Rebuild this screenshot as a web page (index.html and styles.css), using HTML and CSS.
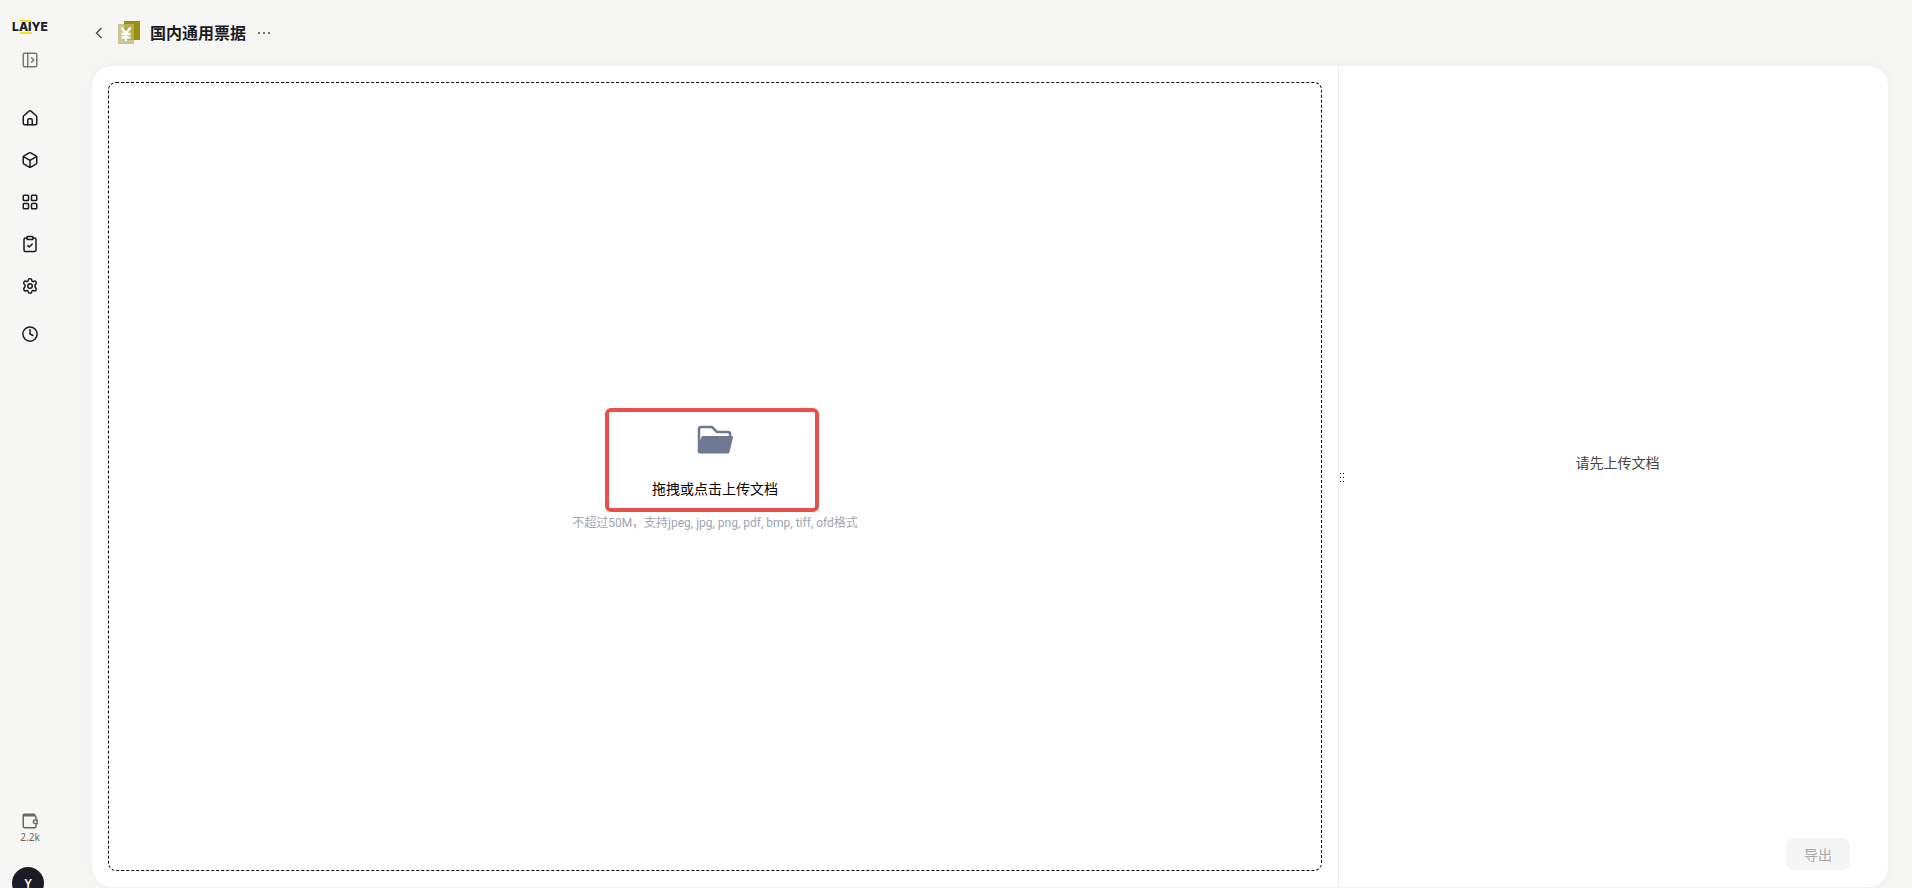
FILE: index.html
```html
<!DOCTYPE html>
<html lang="zh-CN">
<head>
    <meta charset="UTF-8">
    <meta name="viewport" content="width=device-width, initial-scale=1.0">
    <title>国内通用票据</title>
    <link rel="stylesheet" href="styles.css">
</head>
<body>
    <!-- 侧边栏 -->
    <aside class="sidebar">
        <a href="#" class="logo">LAIYE</a>
        <button type="button" class="icon-button toggle" aria-label="展开菜单">
            <svg class="icon" viewBox="0 0 24 24"><rect x="3" y="3" width="18" height="18" rx="2"/><path d="M9 3v18M14 9l3 3-3 3"/></svg>
        </button>
        <nav class="nav">
            <a href="#" aria-label="首页">
                <svg class="icon" viewBox="0 0 24 24"><path d="M3 10.5a2 2 0 0 1 .7-1.5l7-6.100a2 2 0 0 1 2.600 0l7 6.100a2 2 0 0 1 .7 1.500V19a2 2 0 0 1-2 2H5a2 2 0 0 1-2-2z"/><path d="M9 21v-6a2 2 0 0 1 2-2h2a2 2 0 0 1 2 2v6"/></svg>
            </a>
            <a href="#" aria-label="模型">
                <svg class="icon" viewBox="0 0 24 24"><path d="M11 2.600a2 2 0 0 1 2 0l7 4a2 2 0 0 1 1 1.700v7.400a2 2 0 0 1-1 1.700l-7 4a2 2 0 0 1-2 0l-7-4a2 2 0 0 1-1-1.700V8.300a2 2 0 0 1 1-1.700z"/><path d="M3.300 7.500L12 12.500l8.700-5M12 12.500v9"/></svg>
            </a>
            <a href="#" aria-label="应用">
                <svg class="icon" viewBox="0 0 24 24"><rect x="3" y="3" width="7" height="7" rx="1"/><rect x="14" y="3" width="7" height="7" rx="1"/><rect x="3" y="14" width="7" height="7" rx="1"/><rect x="14" y="14" width="7" height="7" rx="1"/></svg>
            </a>
            <a href="#" aria-label="任务">
                <svg class="icon" viewBox="0 0 24 24"><rect x="8" y="2" width="8" height="4" rx="1"/><path d="M16 4h2a2 2 0 0 1 2 2v14a2 2 0 0 1-2 2H6a2 2 0 0 1-2-2V6a2 2 0 0 1 2-2h2M9 14l2 2 4-4"/></svg>
            </a>
            <a href="#" aria-label="设置">
                <svg class="icon" viewBox="0 0 24 24"><path d="M10 3.200c.3-1.300 3.700-1.300 4 0 .3 2.600 1.700 3.300 3.600 2.400 1.800-.7 3.700 2.400 2.400 3.600-2 1.500-2 4.100 0 5.600 1.300 1.200-.6 4.300-2.400 3.600-1.900-.9-3.300-.2-3.600 2.400-.3 1.300-3.700 1.300-4 0-.3-2.600-1.700-3.300-3.600-2.400-1.800.7-3.700-2.400-2.400-3.600 2-1.500 2-4.100 0-5.600-1.300-1.200.6-4.300 2.400-3.600 1.900.9 3.300.2 3.600-2.400z"/><circle cx="12" cy="12" r="3"/></svg>
            </a>
            <a href="#" class="history" aria-label="历史记录">
                <svg class="icon" viewBox="0 0 24 24"><circle cx="12" cy="12" r="9.500"/><path d="M12 6v6l4 2"/></svg>
            </a>
        </nav>
        <div class="account">
            <a href="#" class="wallet">
                <svg class="icon" viewBox="0 0 24 24"><path d="M20 9V7a2 2 0 0 0-2-2H4a1 1 0 0 1-1-1 1 1 0 0 1 1-1h14v2M3 4v15a2 2 0 0 0 2 2h13a2 2 0 0 0 2-2v-2"/><path d="M19 10.500h2.500v5H19a2.500 2.500 0 0 1 0-5z"/></svg>
                <span>2.2k</span>
            </a>
            <button type="button" class="avatar">Y</button>
        </div>
    </aside>

    <main class="main">
        <header class="header">
            <button type="button" class="icon-button back" aria-label="返回">
                <svg viewBox="0 0 14 14"><path d="M9.500 2L4.500 7l5 5"/></svg>
            </button>
            <svg class="app-icon" viewBox="0 0 24 24" aria-hidden="true">
                <path d="M7 0h16v19H7z" fill="#998f0c"/>
                <path d="M1 3h16v20H1z" fill="#c9c78f"/>
                <path d="M7 3h10v16H7z" fill="#b3ad58"/>
                <path d="M4.500 6.500l4.500 6 4.500-6M9 12.500V20M4.500 13h9M4.500 16.500h9" fill="none" stroke="#fff" stroke-width="2.300"/>
            </svg>
            <h1>国内通用票据</h1>
            <button type="button" class="icon-button more" aria-label="更多">
                <svg viewBox="0 0 14 14"><circle cx="2" cy="7" r="1"/><circle cx="7" cy="7" r="1"/><circle cx="12" cy="7" r="1"/></svg>
            </button>
        </header>

        <div class="card">
            <!-- 上传区域 -->
            <section class="upload-panel">
                <label class="dropzone">
                    <input type="file" class="file-input" accept=".jpeg,.jpg,.png,.pdf,.bmp,.tiff,.ofd" multiple>
                    <span class="upload-main">
                        <svg class="folder" viewBox="0 0 40 40" aria-hidden="true">
                            <path d="M4 30V8q0-2 2-2h11l5 5h11q2 0 2 2v4" fill="none" stroke="#6f7992" stroke-width="2.500"/>
                            <path d="M6.500 16q.5-1 1.500-1H37q1.500 0 1 1.500L34.500 31q-.4 1.500-2 1.500H4.500q-1.800 0-1.800-2L4 22z" fill="#6f7992"/>
                        </svg>
                        <span class="upload-title">拖拽或点击上传文档</span>
                        <span class="highlight"></span>
                    </span>
                    <span class="upload-hint">不超过50M，支持jpeg, jpg, png, pdf, bmp, tiff, ofd格式</span>
                </label>
            </section>

            <!-- 识别结果 -->
            <section class="result-panel">
                <div class="resize-handle">
                    <svg viewBox="0 0 8 12"><path d="M1 2h1v1H1zM4 2h1v1H4zM1 6h1v1H1zM4 6h1v1H4zM1 10h1v1H1zM4 10h1v1H4z"/></svg>
                </div>
                <div class="result">
                    <p class="empty">请先上传文档</p>
                    <button type="button" class="export" disabled>导出</button>
                </div>
            </section>
        </div>
    </main>
</body>
</html>
```

FILE: styles.css
```css
* {
    box-sizing: border-box;
}
body {
    margin: 0;
    height: 100vh;
    display: flex;
    overflow: hidden;
    background-color: #f6f6f4;
    color: #1a1b24;
    font-family: "Noto Sans", "Noto Sans CJK SC", sans-serif;
    font-size: 14px;
    line-height: 22px;
}
a {
    color: inherit;
    text-decoration: none;
}
button {
    font-family: inherit;
    cursor: pointer;
}
.icon {
    display: block;
    width: 18px;
    height: 18px;
    fill: none;
    stroke: currentColor;
    stroke-width: 2;
    stroke-linecap: round;
    stroke-linejoin: round;
}
.icon-button {
    display: block;
    padding: 0;
    border: none;
    background: none;
    color: #444;
}

/* 侧边栏 */
.sidebar {
    width: 60px;
    flex-shrink: 0;
    display: flex;
    flex-direction: column;
    align-items: center;
    padding-top: 20px;
}
.logo {
    height: 14px;
    line-height: 14px;
    font-family: Inter, sans-serif;
    font-size: 12px;
    font-weight: 800;
    background: linear-gradient(#f5e020, #f5e020) 8px 0 / 12px 2px no-repeat,
        linear-gradient(#f5e020, #f5e020) 8px 12px / 12px 2px no-repeat;
}
.toggle {
    margin-top: 17px;
    color: #777;
}
.nav {
    display: flex;
    flex-direction: column;
    gap: 24px;
    margin-top: 40px;
}
.history {
    margin-top: 6px;
}
.account {
    display: flex;
    flex-direction: column;
    width: 36px;
    margin-top: auto;
    margin-bottom: -11px;
}
.wallet {
    display: flex;
    flex-direction: column;
    align-items: center;
    color: #666;
    font-size: 10px;
    line-height: 14px;
}
.avatar {
    width: 32px;
    height: 32px;
    margin-top: 23px;
    padding: 0;
    border: none;
    border-radius: 50%;
    background-color: #1a1b24;
    color: #fff;
    font-size: 12px;
    font-weight: 600;
}

/* 主区域 */
.main {
    flex: 1;
    min-width: 0;
    display: flex;
    flex-direction: column;
    padding: 0 24px 1px 32px;
}
.header {
    height: 66px;
    flex-shrink: 0;
    display: flex;
    align-items: center;
}
.back svg,
.more svg {
    display: block;
    width: 14px;
    height: 14px;
}
.back svg {
    fill: none;
    stroke: currentColor;
    stroke-width: 1.3;
}
.more svg {
    fill: currentColor;
}
.app-icon {
    width: 24px;
    height: 24px;
    margin: 0 9px 0 11px;
}
.header h1 {
    margin: 0 11px 0 0;
    font-size: 16px;
    font-weight: bold;
}
.card {
    flex: 1;
    min-height: 0;
    display: grid;
    grid-template-columns: minmax(0, 1246fr) minmax(0, 550fr);
    border-radius: 20px;
    background-color: #fff;
    box-shadow: 0 0 8px rgba(0, 0, 0, 0.04);
}

/* 上传 */
.upload-panel {
    padding: 16px;
}
.dropzone {
    position: relative;
    height: 100%;
    display: flex;
    flex-direction: column;
    align-items: center;
    justify-content: center;
    gap: 13px;
    border: 1px dashed #000;
    border-radius: 8px;
    cursor: pointer;
}
.file-input {
    position: absolute;
    width: 1px;
    height: 1px;
    opacity: 0;
}
.upload-main {
    position: relative;
    display: flex;
    flex-direction: column;
    align-items: center;
    gap: 17px;
}
.folder {
    width: 40px;
    height: 40px;
}
.upload-title {
    color: #000;
}
.highlight {
    position: absolute;
    top: -13px;
    right: -41px;
    bottom: -12px;
    left: -47px;
    border: 4px solid #ea504b;
    border-radius: 6px;
}
.upload-hint {
    color: #a0a5b5;
    font-family: Roboto, "Noto Sans CJK SC", sans-serif;
    font-size: 12px;
    line-height: 20px;
}

/* 结果 */
.result-panel {
    display: flex;
    border-left: 1px solid #ebebeb;
}
.resize-handle {
    display: flex;
    align-items: center;
    width: 8px;
    cursor: col-resize;
}
.resize-handle svg {
    width: 8px;
    height: 12px;
    fill: #000;
}
.result {
    flex: 1;
    display: flex;
    flex-direction: column;
    padding: 38px 0 17px;
}
.empty {
    flex: 1;
    display: flex;
    align-items: center;
    justify-content: center;
    margin: 0 0 16px;
    color: #444;
}
.export {
    align-self: flex-end;
    width: 64px;
    height: 32px;
    margin-right: 38px;
    border: none;
    border-radius: 8px;
    background-color: #f5f5f5;
    color: #aaa;
    font-size: 14px;
    cursor: not-allowed;
}
```
